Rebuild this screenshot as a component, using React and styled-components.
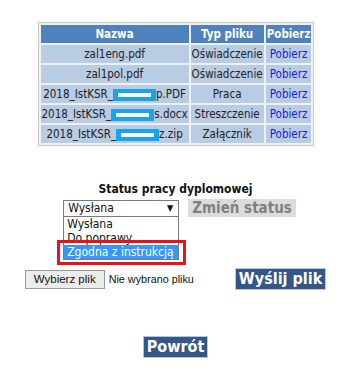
import React from 'react'
import styled, { createGlobalStyle } from 'styled-components'

const GlobalStyle = createGlobalStyle`
    body {
        margin: 0;
        background: #fff;
        font-family: "DejaVu Sans Condensed", "DejaVu Sans", sans-serif;
    }
`

const files = [
    { name: 'zal1eng.pdf', type: 'Oświadczenie' },
    { name: 'zal1pol.pdf', type: 'Oświadczenie' },
    { name: '2018_IstKSR_', tail: 'p.PDF', type: 'Praca' },
    { name: '2018_IstKSR_', tail: 's.docx', type: 'Streszczenie' },
    { name: '2018_IstKSR_', tail: 'z.zip', type: 'Załącznik' },
]

function App() {
    return (
        <Page>
            <GlobalStyle />
            <FileTable>
                <thead>
                    <tr>
                        <Head $w={141}>Nazwa</Head>
                        <Head $w={68}>Typ pliku</Head>
                        <Head>Pobierz</Head>
                    </tr>
                </thead>
                <tbody>
                    {files.map((f, i) => (
                        <tr key={i}>
                            <Cell>
                                {f.name}
                                {f.tail && <>
                                    <Redact><i /></Redact>
                                    {f.tail}
                                </>}
                            </Cell>
                            <Cell>{f.type}</Cell>
                            <Cell><Link href="#">Pobierz</Link></Cell>
                        </tr>
                    ))}
                </tbody>
            </FileTable>

            <Title>Status pracy dyplomowej</Title>
            <StatusRow>
                <SelectWrap>
                    <SelectBox>
                        <span>Wysłana</span>
                        <Arrow>▼</Arrow>
                    </SelectBox>
                    <OptionList>
                        <Option>Wysłana</Option>
                        <Option>Do poprawy</Option>
                        <Option $active>Zgodna z instrukcją</Option>
                    </OptionList>
                    <Marker />
                </SelectWrap>
                <GrayButton>Zmień status</GrayButton>
            </StatusRow>

            <UploadRow>
                <FilePick>
                    <PickButton>Wybierz plik</PickButton>
                    <span>Nie wybrano pliku</span>
                </FilePick>
                <BlueButton>Wyślij plik</BlueButton>
            </UploadRow>

            <BlueButton $back>Powrót</BlueButton>
        </Page>
    )
}

export default App

const Page = styled.div`
    width: 351px;
    display: flex;
    flex-direction: column;
    align-items: center;
    padding-top: 22px;
`
const FileTable = styled.table`
    border: 1px solid #c9c9c9;
    border-spacing: 2px;
    background: #eef0f3;
    font-size: 11.5px;
    margin-left: 1px;
`
const Head = styled.th`
    background: #4f81bd;
    color: #fff;
    font-weight: bold;
    height: 18px;
    padding: 0 1px;
    width: ${p => p.$w ? p.$w + 'px' : 'auto'};
    white-space: nowrap;
`
const Cell = styled.td`
    background: #b8cce4;
    color: #222;
    height: 18px;
    padding: 0 1px;
    text-align: center;
    white-space: nowrap;
`
const Redact = styled.span`
    display: inline-flex;
    align-items: center;
    justify-content: center;
    width: 43px;
    height: 12px;
    background: #1aa3e8;
    vertical-align: middle;
    i {
        width: 33px;
        height: 4px;
        background: #fff;
    }
`
const Link = styled.a`
    color: #1d1dd8;
    text-decoration: none;
`
const Title = styled.div`
    margin-top: 36px;
    font-size: 12px;
    font-weight: bold;
    color: #111;
`
const StatusRow = styled.div`
    display: flex;
    align-items: center;
    gap: 9px;
    margin-top: 3px;
    margin-left: 8px;
`
const SelectWrap = styled.div`
    position: relative;
    width: 116px;
`
const SelectBox = styled.div`
    height: 15px;
    border: 1px solid #7a7a7a;
    display: flex;
    align-items: center;
    justify-content: space-between;
    padding: 0 5px 0 4px;
    font-size: 12px;
    color: #111;
`
const Arrow = styled.span`
    font-size: 9px;
`
const OptionList = styled.div`
    position: absolute;
    left: 0;
    right: 0;
    top: 17px;
    border: 1px solid #7a7a7a;
    border-top: none;
    background: #fff;
    z-index: 1;
`
const Option = styled.div`
    height: 14px;
    line-height: 14px;
    padding: 0 3px;
    font-size: 12px;
    color: ${p => p.$active ? '#fff' : '#111'};
    background: ${p => p.$active ? '#3399ff' : '#fff'};
`
const Marker = styled.div`
    position: absolute;
    left: -6px;
    top: 40px;
    width: 123px;
    height: 19px;
    border: 3px solid #e8121c;
    z-index: 2;
`
const GrayButton = styled.div`
    background: #dcdcdc;
    color: #808080;
    font-size: 15px;
    font-weight: bold;
    padding: 0 4px;
    height: 18px;
    line-height: 18px;
`
const UploadRow = styled.div`
    display: flex;
    align-items: center;
    gap: 41px;
    margin-top: 51px;
`
const FilePick = styled.div`
    display: flex;
    align-items: center;
    gap: 4px;
    font-family: "Liberation Sans", Arial, sans-serif;
    font-size: 10.8px;
    color: #111;
`
const PickButton = styled.div`
    border: 1px solid #9a9a9a;
    background: #ececec;
    padding: 0 8px;
    height: 17px;
    line-height: 17px;
    font-size: 11.5px;
`
const BlueButton = styled.div`
    background: #34568b;
    color: #fff;
    font-size: 16px;
    font-weight: bold;
    padding: 0 3px;
    height: 20px;
    line-height: 20px;
    border: 1px solid #b9c6da;
    margin-top: ${p => p.$back ? '46px' : '0'};
`
